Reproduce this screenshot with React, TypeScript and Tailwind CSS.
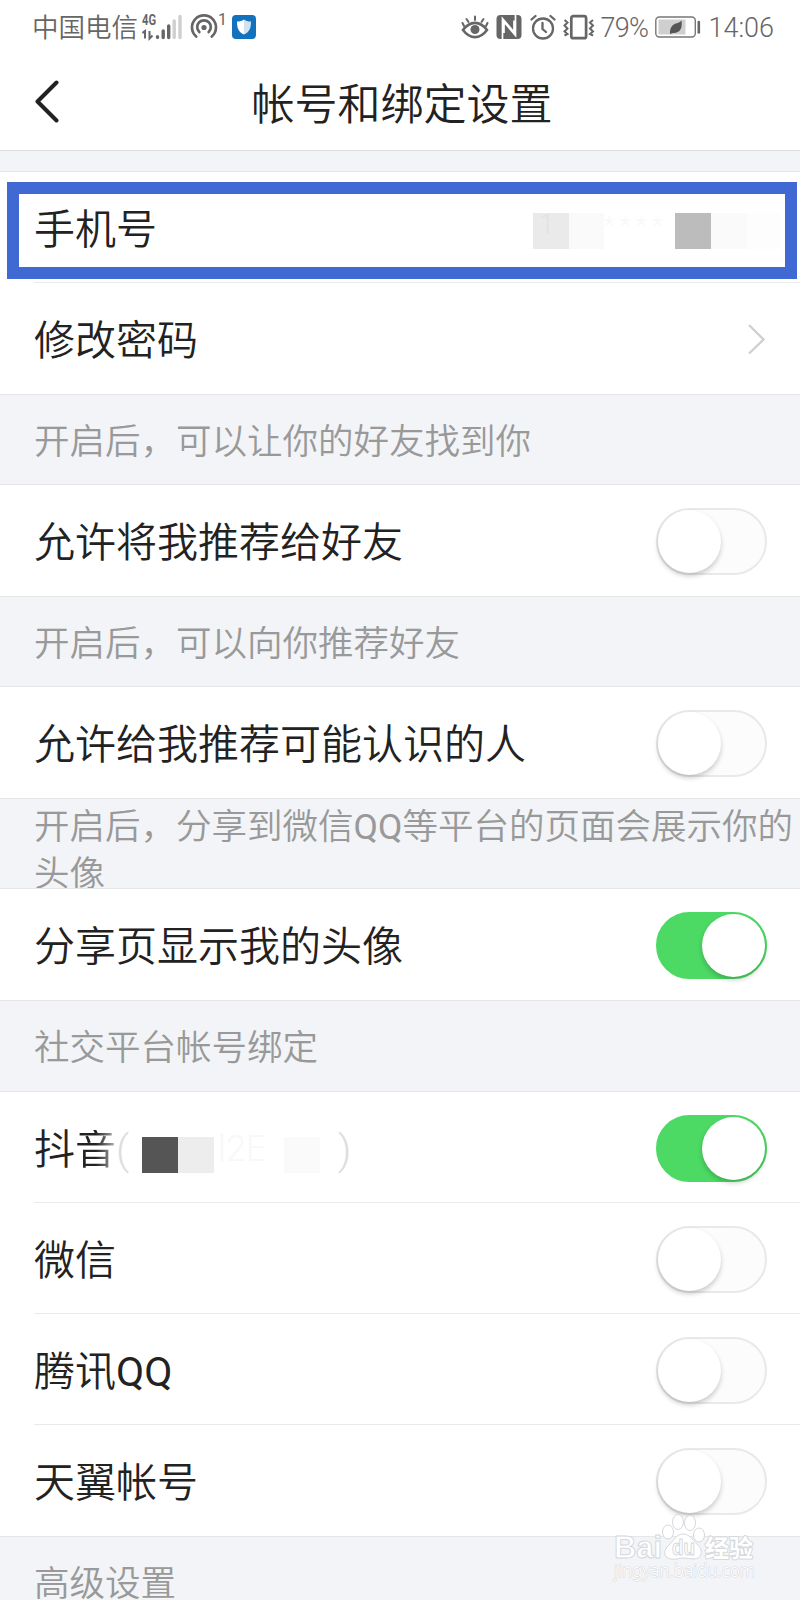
import type { ReactNode } from "react";
import { clsx } from "clsx";

function StatusBar() {
  return (
    <div className="flex h-[54px] items-center justify-between pl-8 pr-[26px] text-[26px] text-[#666]">
      <div className="flex items-center">
        <span className="mt-px w-[105px] whitespace-nowrap text-[26.500px]">中国电信</span>
        {/* 4G signal */}
        <svg className="ml-[5px] h-[28px] w-[42px]" viewBox="0 0 42 28">
          <text x="0" y="12" fontSize="14" fontWeight="700" fill="#666" textLength="14" lengthAdjust="spacingAndGlyphs" fontFamily="Roboto">
            4G
          </text>
          <path d="M0.500 20l2.500-2v7.500M7.500 18v7.500l3-3" stroke="#666" strokeWidth="2" fill="none" />
          <path d="M15.500 23.500v1" stroke="#666" strokeWidth="3.200" strokeLinecap="round" />
          <path d="M21.200 18v6.500M26.700 13v11.500" stroke="#666" strokeWidth="3.400" strokeLinecap="round" />
          <path d="M32.200 8v16.500M38 3.500v21" stroke="#cfcfcf" strokeWidth="3.400" strokeLinecap="round" />
        </svg>
        {/* hotspot */}
        <svg className="ml-1.5 h-7 w-7" viewBox="0 0 28 28" fill="none" stroke="#666" strokeWidth="2.700" strokeLinecap="round">
          <path d="M6.200 23.500a12 12 0 1 1 15.600 0" />
          <path d="M9.300 19a6.800 6.800 0 1 1 9.400 0" />
          <circle cx="14" cy="14.500" r="2.600" fill="#666" stroke="none" />
        </svg>
        <span className="-mt-[14px] font-[Roboto] text-base font-normal leading-none">1</span>
        <svg className="ml-[5px] h-6 w-6" viewBox="0 0 24 24">
          <rect width="24" height="24" rx="4" fill="#1272bd" />
          <path d="M12 4.500c2 1.500 4 2 7 2 0 6-1 10.500-7 13z" fill="#cfe3f2" />
          <path d="M12 4.500c-2 1.500-4 2-7 2 0 6 1 10.500 7 13z" fill="#fff" />
        </svg>
      </div>

      <div className="flex items-center font-[Roboto] text-[27px] font-light">
        {/* eye comfort */}
        <svg className="h-7 w-7" viewBox="0 0 28 28" fill="none" stroke="#666" strokeWidth="2.600" strokeLinecap="round">
          <path d="M2 17c7-9.500 17-9.500 24 0-7 9.500-17 9.500-24 0z" />
          <circle cx="14" cy="16.500" r="4.500" fill="#666" stroke="none" />
          <path d="M14 7V3.500M7.500 9L5.500 6M20.500 9l2-3M3 13L1.500 10M25 13l1.500-3" strokeWidth="2" />
        </svg>
        {/* nfc */}
        <svg className="ml-[7px] h-[26px] w-[26px]" viewBox="0 0 26 26">
          <rect x="0.500" y="1" width="25" height="24" rx="4" fill="#666" />
          <path d="M6.500 25V4.500L18 18V6.500M19.500 1v20.500L8 8v11" fill="none" stroke="#fff" strokeWidth="1.700" />
        </svg>
        {/* alarm */}
        <svg className="ml-2 h-[26px] w-[26px]" viewBox="0 0 26 26" fill="none" stroke="#666" strokeWidth="2.300" strokeLinecap="round">
          <circle cx="13" cy="14.500" r="10" />
          <path d="M12.500 9v6l3.500 3M1.500 5.500l4-3.500M24.500 5.500l-4-3.500" />
        </svg>
        {/* vibrate */}
        <svg className="ml-[7px] h-[26px] w-8" viewBox="0 0 32 26" fill="none" stroke="#666">
          <rect x="8.300" y="2.200" width="14.800" height="22" rx="2" strokeWidth="2.700" />
          <path d="M1.500 6l3 2.500-3 3 3 3-3 3 3 2.500-3 1.500M30 6l-3 2.500 3 3-3 3 3 3-3 2.500 3 1.500" strokeWidth="2" />
        </svg>
        <span className="ml-[5px] mt-0.5 w-[50px] tracking-[-0.700px]">79%</span>
        {/* battery */}
        <svg className="ml-[5px] h-[24px] w-[46px]" viewBox="0 0 46 24">
          <rect x="0.800" y="2" width="39.500" height="20" rx="3.500" fill="none" stroke="#777" strokeWidth="1.400" />
          <rect x="3.500" y="4.500" width="27" height="15" fill="#cfcfcf" />
          <path d="M26.500 5.500c1 7-1 12-7 12.500-2 .2-3-.2-4.500 1.500 0-2-.5-6 2.500-9 2.500-2.500 6.500-2 9-5z" fill="#555" />
          <path d="M43.800 7v10.500" stroke="#666" strokeWidth="2.600" strokeLinecap="round" />
        </svg>
        <span className="ml-[7px] mt-0.5 whitespace-nowrap">14:06</span>
      </div>
    </div>
  );
}

function Header() {
  return (
    <header className="flex h-[97px] items-center border-b border-[#dedede] px-[34px]">
      <svg className="-mt-0.5 h-11 w-7" viewBox="0 0 28 44" fill="none" stroke="#222" strokeWidth="4" strokeLinecap="round" strokeLinejoin="round">
        <path d="M22.500 3.500L3.500 22.500l19 19" />
      </svg>
      <h1 className="mr-6 flex-1 pt-1.5 text-center text-[43px] leading-none text-[#222]">
        帐号和绑定设置
      </h1>
    </header>
  );
}

function Toggle({ on = false }: { on?: boolean }) {
  return (
    <span
      className={clsx(
        "mr-[33px] mt-0.5 flex h-[67px] w-[111px] shrink-0 items-center rounded-full border-2",
        on ? "justify-end border-[#4cd964] bg-[#4cd964]" : "justify-start border-[#e9e9e9] bg-[#fcfcfc]",
      )}
    >
      <span className="h-[63px] w-[63px] rounded-full bg-white shadow-[0_3px_5px_rgba(0,0,0,0.2)]" />
    </span>
  );
}

function Row({ label, last = false, children }: { label: ReactNode; last?: boolean; children?: ReactNode }) {
  return (
    <div className={clsx("bg-white", last ? "border-b border-[#e6e6e6]" : "pl-[34px]")}>
      <div
        className={clsx(
          "flex h-[111px] items-center justify-between",
          last ? "pl-[34px]" : "border-b border-[#e9e9e9]",
        )}
      >
        <span className="whitespace-nowrap pt-1.5 text-[41px] leading-none text-[#222]">{label}</span>
        {children}
      </div>
    </div>
  );
}

function SectionNote({ className, children }: { className?: string; children: ReactNode }) {
  return (
    <div
      className={clsx(
        "flex items-center overflow-hidden border-b border-[#e6e6e6] bg-[#f2f4f7] pl-[34px] text-[35.500px] leading-[47px] text-[#999]",
        className ?? "h-[90px] pt-[5px]",
      )}
    >
      <p className="w-[766px]">{children}</p>
    </div>
  );
}

function Watermark() {
  return (
    <svg
      className="absolute left-[608px] top-[1510px] h-[76px] w-[156px]"
      viewBox="0 0 156 76"
      fill="#fff"
      stroke="#d5d8dc"
      strokeWidth="1"
      strokeLinejoin="round"
    >
      <text x="6" y="48" fontSize="32" fontWeight="700" fontFamily="Liberation Sans" textLength="48" lengthAdjust="spacingAndGlyphs">
        Bai
      </text>
      <ellipse cx="60" cy="22" rx="5.500" ry="7" />
      <ellipse cx="70" cy="12" rx="5.500" ry="7.500" />
      <ellipse cx="82" cy="13" rx="5.500" ry="7.500" />
      <ellipse cx="91" cy="25" rx="5.500" ry="7" />
      <path d="M75 24c7 0 9 6 14 10 7 6 5 15-3 15-4 0-7-1-11-1s-8 2-12 1c-8-1-8-9-2-14 5-4 7-11 14-11z" />
      <text x="64" y="45" fontSize="22" fontWeight="700" fontFamily="Liberation Sans" textLength="23" lengthAdjust="spacingAndGlyphs">
        du
      </text>
      <text x="97" y="47" fontSize="24" fontWeight="700" fontFamily="Noto Sans CJK SC" strokeWidth="2" paintOrder="stroke">
        经验
      </text>
      <text x="6" y="67" fontSize="18" fontFamily="Noto Sans" paintOrder="stroke" textLength="141" lengthAdjust="spacingAndGlyphs">
        jingyan.baidu.com
      </text>
    </svg>
  );
}

export default function App() {
  return (
    <main className="relative h-[1600px] w-[800px] overflow-hidden bg-white font-[Roboto,'Noto_Sans_CJK_SC',sans-serif] font-[350]">
      <StatusBar />
      <Header />
      <div className="h-[21px] border-b border-[#e6e6e6] bg-[#f2f4f7]" />

      <div className="relative">
        <Row label="手机号">
          {/* masked phone number */}
          <span className="mr-[19px] mt-2 flex h-9 w-[248px]">
            <span className="w-9 bg-[#eaeaea] pl-1.5 text-[28px] leading-6 text-[#e2e2e2]">1</span>
            <span className="w-[35px] bg-[#fafafa]" />
            <span className="w-[71px] text-2xl leading-6 tracking-[6px] text-[#f8f8f8]">****</span>
            <span className="w-9 bg-[#bcbcbc]" />
            <span className="w-9 bg-[#fafafa]" />
            <span className="w-[34px] bg-[#fdfdfd]" />
          </span>
        </Row>
        <div className="absolute left-[7px] top-2.5 h-[97px] w-[790px] border-12 border-[#4169d3]" />
      </div>
      <Row label="修改密码" last>
        <svg className="mr-[33px] h-8 w-5" viewBox="0 0 20 32" fill="none" stroke="#d0d0d0" strokeWidth="2.400">
          <path d="M2 2l14.500 14.500L2 30.500" />
        </svg>
      </Row>

      <SectionNote>开启后，可以让你的好友找到你</SectionNote>
      <Row label="允许将我推荐给好友" last>
        <Toggle />
      </Row>

      <SectionNote>开启后，可以向你推荐好友</SectionNote>
      <Row label="允许给我推荐可能认识的人" last>
        <Toggle />
      </Row>

      <SectionNote className="h-[90px] pt-3.5">
        开启后，分享到微信<span className="font-normal">QQ</span>等平台的页面会展示你的头像
      </SectionNote>
      <Row label="分享页显示我的头像" last>
        <Toggle on />
      </Row>

      <SectionNote className="h-[91px] pt-[5px]">社交平台帐号绑定</SectionNote>
      <Row
        label={
          <span className="flex items-center">
            <span>抖</span>
            <span className="bg-linear-to-r from-[#222] from-50% to-[#bbb] bg-clip-text text-transparent">音</span>
            <span className="w-[26px] text-[#ddd]">(</span>
            {/* masked nickname */}
            <span className="mt-2.5 flex h-9 w-[196px]">
              <span className="w-9 bg-[#555]" />
              <span className="w-9 bg-[#ededed]" />
              <span className="w-[70px] pl-1 text-4xl leading-6 text-[#f8f8f8]">l2E</span>
              <span className="w-9 bg-[#fafafa]" />
            </span>
            <span className="text-[#ddd]">)</span>
          </span>
        }
      >
        <Toggle on />
      </Row>
      <Row label="微信">
        <Toggle />
      </Row>
      <Row
        label={
          <>
            腾讯<span className="font-normal">QQ</span>
          </>
        }
      >
        <Toggle />
      </Row>
      <Row label="天翼帐号" last>
        <Toggle />
      </Row>
      <SectionNote>高级设置</SectionNote>

      <Watermark />
    </main>
  );
}
